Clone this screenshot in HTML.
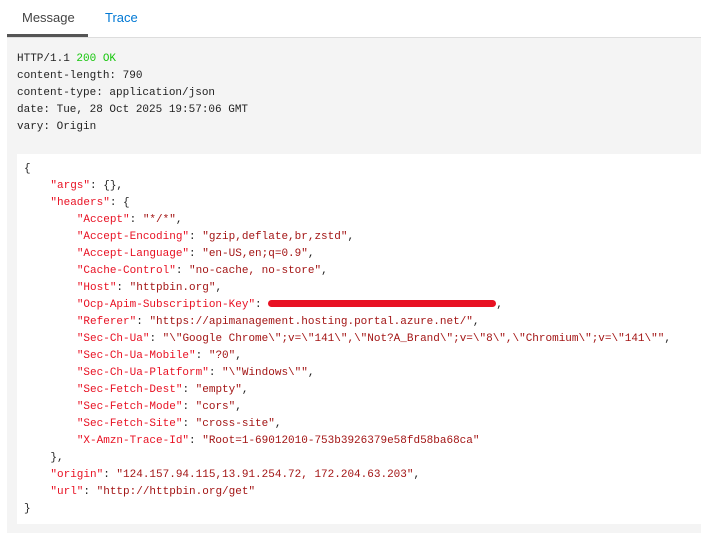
<!DOCTYPE html>
<html><head><style>
body{margin:0;width:701px;height:532px;background:#fff;overflow:hidden;font-family:"Liberation Sans",sans-serif}
.tabs{position:absolute;left:0;top:0;width:701px;height:37px}
.tab{position:absolute;top:10px;font-size:13px}
.ul{position:absolute;left:7px;top:34px;width:81px;height:3px;background:#555}
.panel{position:absolute;left:7px;top:37px;width:694px;height:495px;background:#f4f4f4;border-top:1px solid #ddd}
pre{margin:0;font-family:"Liberation Mono",monospace;font-size:11px;line-height:17px;color:#222}
.hd{position:absolute;left:10px;top:13px}
.box{position:absolute;left:10px;top:116px;width:684px;height:370px;background:#fff}
.js{position:absolute;left:7px;top:7px}
.k{color:#e81123}.v{color:#a31515}.g{color:#16c60c}
.red{display:inline-block;width:228px;height:7px;background:#e81123;border-radius:4px;vertical-align:0px}
</style></head><body>
<div class="tabs">
<div class="tab" style="left:22px;color:#444">Message</div>
<div class="tab" style="left:105px;color:#0078d4">Trace</div>
<div class="ul"></div>
</div>
<div class="panel">
<pre class="hd">HTTP/1.1 <span class="g">200 OK</span>
content-length: 790
content-type: application/json
date: Tue, 28 Oct 2025 19:57:06 GMT
vary: Origin</pre>
<div class="box"><pre class="js">{
    <span class="k">"args"</span>: {},
    <span class="k">"headers"</span>: {
        <span class="k">"Accept"</span>: <span class="v">"*/*"</span>,
        <span class="k">"Accept-Encoding"</span>: <span class="v">"gzip,deflate,br,zstd"</span>,
        <span class="k">"Accept-Language"</span>: <span class="v">"en-US,en;q=0.9"</span>,
        <span class="k">"Cache-Control"</span>: <span class="v">"no-cache, no-store"</span>,
        <span class="k">"Host"</span>: <span class="v">"httpbin.org"</span>,
        <span class="k">"Ocp-Apim-Subscription-Key"</span>: <span class="red"></span>,
        <span class="k">"Referer"</span>: <span class="v">"https://apimanagement.hosting.portal.azure.net/"</span>,
        <span class="k">"Sec-Ch-Ua"</span>: <span class="v">"\"Google Chrome\";v=\"141\",\"Not?A_Brand\";v=\"8\",\"Chromium\";v=\"141\""</span>,
        <span class="k">"Sec-Ch-Ua-Mobile"</span>: <span class="v">"?0"</span>,
        <span class="k">"Sec-Ch-Ua-Platform"</span>: <span class="v">"\"Windows\""</span>,
        <span class="k">"Sec-Fetch-Dest"</span>: <span class="v">"empty"</span>,
        <span class="k">"Sec-Fetch-Mode"</span>: <span class="v">"cors"</span>,
        <span class="k">"Sec-Fetch-Site"</span>: <span class="v">"cross-site"</span>,
        <span class="k">"X-Amzn-Trace-Id"</span>: <span class="v">"Root=1-69012010-753b3926379e58fd58ba68ca"</span>
    },
    <span class="k">"origin"</span>: <span class="v">"124.157.94.115,13.91.254.72, 172.204.63.203"</span>,
    <span class="k">"url"</span>: <span class="v">"http://httpbin.org/get"</span>
}</pre></div>
</div>
</body></html>
